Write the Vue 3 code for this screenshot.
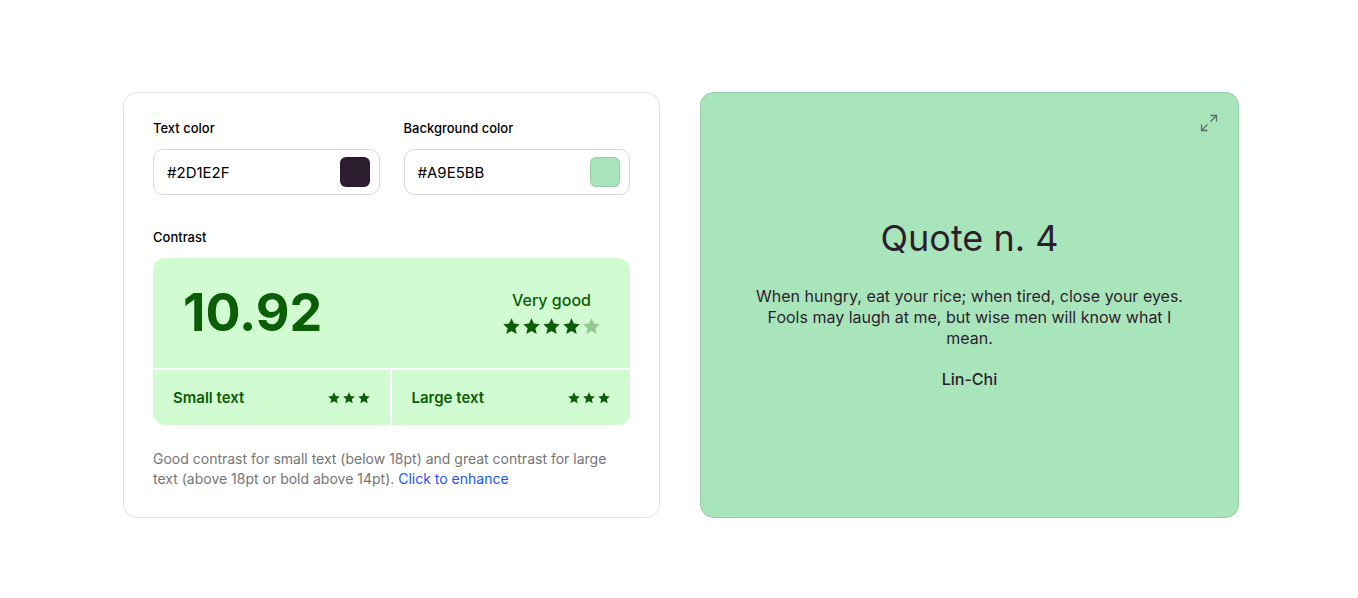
<script setup>
import { computed, ref } from 'vue'

const textColor = ref('#2D1E2F')
const backgroundColor = ref('#A9E5BB')

const previewStyle = computed(() => ({
  color: textColor.value,
  backgroundColor: backgroundColor.value,
}))

const starPath =
  'M10 0.4 L12.9 6.6 L19.7 7.3 L14.6 12 L16.1 18.8 L10 15.3 L3.9 18.8 L5.4 12 L0.3 7.3 L7.1 6.6 Z'
const ratings = ['Small text', 'Large text']
</script>

<template>
  <main class="checker">
    <section class="card panel">
      <div class="fields">
        <div class="field">
          <label for="text-color">Text color</label>
          <div class="control">
            <input id="text-color" v-model="textColor" type="text" spellcheck="false" />
            <button
              class="swatch"
              type="button"
              aria-label="Pick text color"
              :style="{ backgroundColor: textColor }"
            ></button>
          </div>
        </div>
        <div class="field">
          <label for="background-color">Background color</label>
          <div class="control">
            <input id="background-color" v-model="backgroundColor" type="text" spellcheck="false" />
            <button
              class="swatch"
              type="button"
              aria-label="Pick background color"
              :style="{ backgroundColor: backgroundColor }"
            ></button>
          </div>
        </div>
      </div>

      <h2 class="heading">Contrast</h2>
      <div class="score">
        <div class="summary">
          <strong class="ratio">10.92</strong>
          <div class="verdict">
            <span>Very good</span>
            <div class="stars large">
              <svg v-for="n in 5" :key="n" viewBox="0 0 20 20" :class="{ faded: n === 5 }">
                <path :d="starPath" />
              </svg>
            </div>
          </div>
        </div>
        <div class="details">
          <div v-for="label in ratings" :key="label" class="detail">
            <span>{{ label }}</span>
            <div class="stars">
              <svg v-for="n in 3" :key="n" viewBox="0 0 20 20"><path :d="starPath" /></svg>
            </div>
          </div>
        </div>
      </div>

      <p class="note">
        Good contrast for small text (below 18pt) and great contrast for large text (above 18pt or
        bold above 14pt). <a href="#enhance">Click to enhance</a>
      </p>
    </section>

    <section class="card preview" :style="previewStyle">
      <button class="expand" type="button" aria-label="Full screen">
        <svg viewBox="0 0 18 18">
          <path d="M10.5 1.5H16.5V7.5M16.5 1.5L10.5 7.5M1.5 10.5V16.5H7.5M1.5 16.5L7.5 10.5" />
        </svg>
      </button>
      <h1>Quote n. 4</h1>
      <p class="quote">
        When hungry, eat your rice; when tired, close your eyes. Fools may laugh at me, but wise men
        will know what I mean.
      </p>
      <p class="author">Lin-Chi</p>
    </section>
  </main>
</template>

<style>
body {
  margin: 0;
  background: #fff;
}
</style>

<style scoped>
.checker {
  display: grid;
  grid-template-columns: minmax(0, 537fr) minmax(0, 539fr);
  gap: 40px;
  box-sizing: border-box;
  max-width: 1358px;
  margin: 0 auto;
  padding: 92px 119px 80px 123px;
  font-family: Inter, "Liberation Sans", sans-serif;
  color: #000;
}
.card {
  box-sizing: border-box;
  border: 1px solid #e2e2e2;
  border-radius: 14px;
}
.panel {
  padding: 27px 29px 28px;
}
.fields {
  display: grid;
  grid-template-columns: minmax(0, 1fr) minmax(0, 1fr);
  gap: 24px;
}
label,
.heading {
  display: block;
  margin: 0;
  font-size: 13px;
  font-weight: 500;
  line-height: 16px;
}
.control {
  display: flex;
  align-items: center;
  box-sizing: border-box;
  height: 46px;
  margin-top: 13px;
  padding: 0 9px 0 13px;
  border: 1px solid #d8d8d8;
  border-radius: 10px;
}
input {
  flex: 1;
  width: 100%;
  min-width: 0;
  padding: 2px 0 0;
  border: 0;
  outline: 0;
  background: transparent;
  color: inherit;
  font: 400 15px/20px Inter, "Liberation Sans", sans-serif;
}
.swatch {
  flex: none;
  width: 30px;
  height: 30px;
  padding: 0;
  border: 1px solid rgba(0, 0, 0, 0.1);
  border-radius: 6px;
}
.heading {
  margin: 34px 0 13px;
}
.score {
  overflow: hidden;
  border-radius: 12px;
  color: #0b5d07;
  font-weight: 500;
}
.summary {
  display: flex;
  align-items: center;
  justify-content: space-between;
  box-sizing: border-box;
  height: 110px;
  padding: 0 30px;
  background: #d1fbd0;
}
.ratio {
  font-size: 52px;
  font-weight: 700;
  line-height: 60px;
}
.verdict {
  display: flex;
  flex-direction: column;
  align-items: center;
  gap: 8px;
  padding-bottom: 2px;
  font-size: 16px;
  line-height: 20px;
}
.stars {
  display: flex;
  gap: 3px;
}
.stars svg {
  width: 12px;
  height: 12px;
  fill: currentColor;
}
.stars.large svg {
  width: 17px;
  height: 17px;
}
.faded {
  opacity: 0.3;
}
.details {
  display: grid;
  grid-template-columns: 1fr 1fr;
  margin-top: 2px;
}
.detail {
  display: flex;
  align-items: center;
  justify-content: space-between;
  box-sizing: border-box;
  height: 55px;
  padding: 0 20px;
  background: #d1fbd0;
  font-size: 15px;
  font-weight: 600;
  line-height: 20px;
}
.detail:first-child {
  border-right: 2px solid #fff;
}
.note {
  margin: 24px 0 0;
  color: #757575;
  font-size: 14px;
  line-height: 20px;
}
.note a {
  color: #1a53ff;
  text-decoration: none;
}
.preview {
  position: relative;
  display: flex;
  flex-direction: column;
  align-items: center;
  justify-content: center;
  padding: 0 50px 4px;
  border-color: rgba(0, 0, 0, 0.1);
  text-align: center;
}
.expand {
  position: absolute;
  top: 21px;
  right: 20px;
  padding: 0;
  border: 0;
  background: none;
  color: inherit;
  opacity: 0.6;
}
.expand svg {
  display: block;
  width: 18px;
  height: 18px;
  fill: none;
  stroke: currentColor;
  stroke-width: 1.3;
}
h1 {
  margin: 0;
  font-size: 36px;
  font-weight: 400;
  line-height: 44px;
}
.quote {
  margin: 26px 0 0;
  font-size: 16px;
  line-height: 21px;
}
.author {
  margin: 20px 0 0;
  font-size: 16px;
  font-weight: 500;
  line-height: 21px;
}
</style>
